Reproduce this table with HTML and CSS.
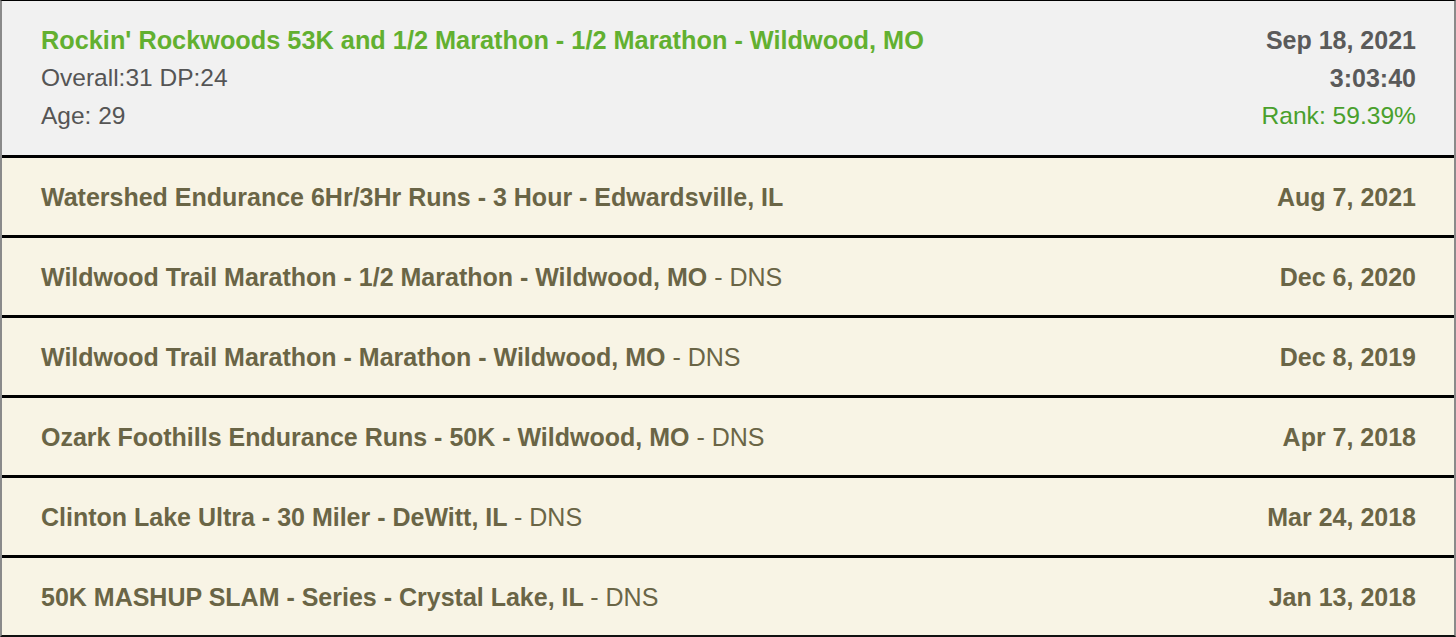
FILE: index.html
```html
<!DOCTYPE html>
<html>
<head>
<meta charset="utf-8">
<link rel="stylesheet" href="styles.css">
</head>
<body>
<div class="list">
  <div class="row featured">
    <div class="left">
      <div class="title">Rockin' Rockwoods 53K and 1/2 Marathon - 1/2 Marathon - Wildwood, MO</div>
      <div class="meta">Overall:31 DP:24</div>
      <div class="meta">Age: 29</div>
    </div>
    <div class="right">
      <div class="date">Sep 18, 2021</div>
      <div class="date">3:03:40</div>
      <div class="rank">Rank: 59.39%</div>
    </div>
  </div>
  <div class="row">
    <div class="name">Watershed Endurance 6Hr/3Hr Runs - 3 Hour - Edwardsville, IL</div>
    <div class="date">Aug 7, 2021</div>
  </div>
  <div class="row">
    <div class="name">Wildwood Trail Marathon - 1/2 Marathon - Wildwood, MO <span class="dns">- DNS</span></div>
    <div class="date">Dec 6, 2020</div>
  </div>
  <div class="row">
    <div class="name">Wildwood Trail Marathon - Marathon - Wildwood, MO <span class="dns">- DNS</span></div>
    <div class="date">Dec 8, 2019</div>
  </div>
  <div class="row">
    <div class="name">Ozark Foothills Endurance Runs - 50K - Wildwood, MO <span class="dns">- DNS</span></div>
    <div class="date">Apr 7, 2018</div>
  </div>
  <div class="row">
    <div class="name">Clinton Lake Ultra - 30 Miler - DeWitt, IL <span class="dns">- DNS</span></div>
    <div class="date">Mar 24, 2018</div>
  </div>
  <div class="row">
    <div class="name">50K MASHUP SLAM - Series - Crystal Lake, IL <span class="dns">- DNS</span></div>
    <div class="date">Jan 13, 2018</div>
  </div>
</div>
</body>
</html>
```

FILE: styles.css
```css
html, body {
  margin: 0;
  padding: 0;
}
body {
  font-family: "Liberation Sans", Arial, sans-serif;
  background: #ffffff;
}
.list {
  width: 1456px;
  height: 637px;
  box-sizing: border-box;
  border-top: 1px solid #000;
  border-left: 2px solid #8a8a8a;
  border-right: 2px solid #8a8a8a;
  border-bottom: 2px solid #111;
  display: flex;
  flex-direction: column;
  overflow: hidden;
}
.row {
  display: flex;
  justify-content: space-between;
  align-items: center;
  padding: 19.5px 38px 19.5px 39px;
  background: #f8f4e5;
  border-top: 3px solid #000;
  font-size: 25px;
  line-height: 38px;
  color: #6a6546;
}
.row.featured {
  border-top: none;
  background: #f1f1f1;
  padding-top: 20px;
  padding-bottom: 20px;
  align-items: flex-start;
}
.name, .date {
  font-weight: bold;
}
.dns {
  font-weight: normal;
}
.title {
  font-weight: bold;
  font-size: 25.3px;
  color: #62b030;
}
.meta {
  font-size: 24.5px;
  color: #555555;
}
.featured .date {
  color: #5a5a5a;
}
.right {
  text-align: right;
}
.rank {
  font-size: 24.6px;
  color: #49a02c;
}
```
